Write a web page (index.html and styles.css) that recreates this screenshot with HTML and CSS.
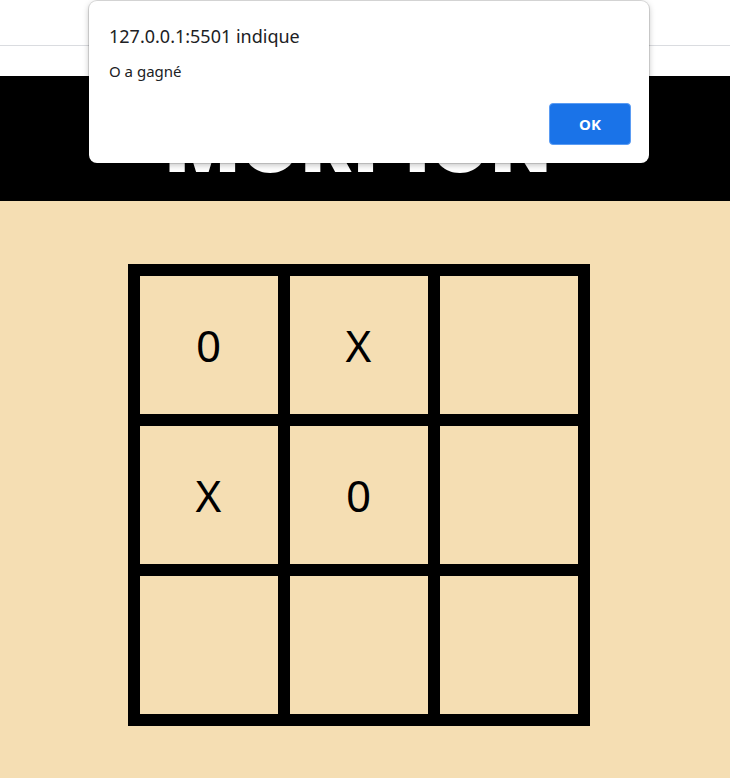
FILE: index.html
```html
<!DOCTYPE html>
<html lang="fr">
<head>
<meta charset="utf-8">
<title>Morpion</title>
<link rel="stylesheet" href="styles.css">
</head>
<body>
<div class="chrome"></div>
<div class="spacer"></div>
<header class="header">
  <h1 class="title">MORPION</h1>
</header>
<main class="main">
  <div class="board">
    <div class="cell">0</div>
    <div class="cell">X</div>
    <div class="cell"></div>
    <div class="cell">X</div>
    <div class="cell">0</div>
    <div class="cell"></div>
    <div class="cell"></div>
    <div class="cell"></div>
    <div class="cell"></div>
  </div>
</main>
<div class="dialog" role="alertdialog">
  <div class="dialog-title">127.0.0.1:5501 indique</div>
  <div class="dialog-msg">O a gagné</div>
  <div class="dialog-actions">
    <button class="ok">OK</button>
  </div>
</div>
</body>
</html>
```

FILE: styles.css
```css
html, body {
  margin: 0;
  padding: 0;
}
body {
  background: #f5deb3;
  font-family: "Noto Sans", "Open Sans", sans-serif;
  min-height: 778px;
  position: relative;
}
.chrome {
  height: 45px;
  background: #ffffff;
  border-bottom: 1px solid #dadce0;
}
.spacer {
  height: 30px;
  background: #ffffff;
}
.header {
  background: #000000;
  height: 125px;
  box-sizing: border-box;
  padding: 32px 12px 21px 0;
}
.title {
  margin: 0;
  text-align: center;
  color: #ffffff;
  font-family: Inter, "DejaVu Sans", sans-serif;
  font-weight: 900;
  font-size: 76px;
  line-height: 72px;
  letter-spacing: 2px;
}
.main {
  padding: 63px 13px 0 0;
  display: flex;
  justify-content: center;
}
.board {
  display: grid;
  grid-template-columns: repeat(3, 138px);
  grid-template-rows: repeat(3, 138px);
  gap: 12px;
  padding: 12px;
  background: #000000;
}
.cell {
  background: #f5deb3;
  display: flex;
  align-items: center;
  justify-content: center;
  font-family: "Noto Sans", "Open Sans", sans-serif;
  font-size: 44px;
  color: #000000;
}
.dialog {
  position: absolute;
  left: 89px;
  top: 1px;
  width: 560px;
  height: 162px;
  box-sizing: border-box;
  background: #ffffff;
  border-radius: 8px;
  box-shadow: 0 0 0 1px rgba(0,0,0,0.12), 0 2px 6px rgba(0,0,0,0.25);
  padding: 23px 18px 0 20px;
  color: #202124;
}
.dialog-title {
  font-size: 18px;
  line-height: 24px;
}
.dialog-msg {
  margin-top: 13px;
  font-size: 15px;
  line-height: 20px;
}
.dialog-actions {
  display: flex;
  justify-content: flex-end;
  margin-top: 22px;
}
.ok {
  width: 82px;
  height: 42px;
  background: #1a73e8;
  border: 1px solid #5b9cf3;
  border-radius: 4px;
  color: #ffffff;
  font-family: "Noto Sans", "Open Sans", sans-serif;
  font-weight: 700;
  font-size: 15px;
  padding: 0;
}
```
